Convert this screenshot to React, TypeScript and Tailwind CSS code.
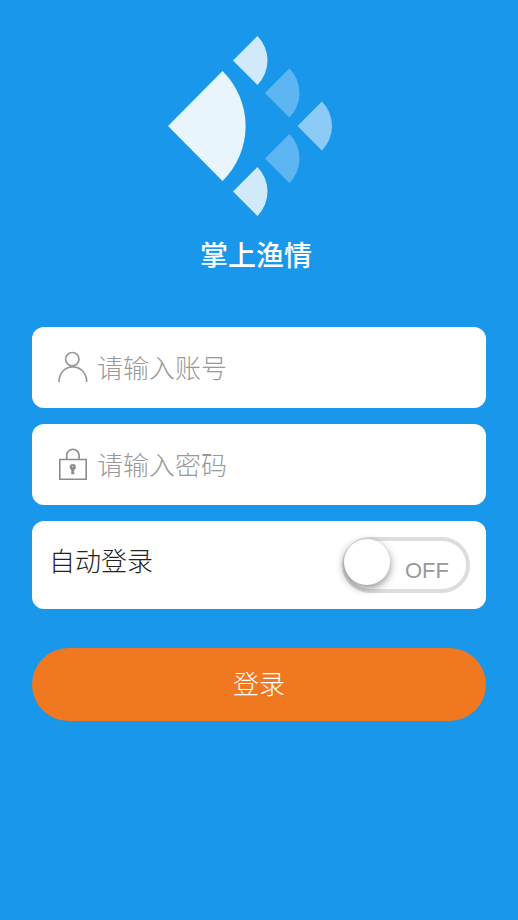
import { useState } from 'react';
import type { FormEvent, ReactNode } from 'react';

// 小扇形：顶点坐标和透明度
const scales = [
  { x: 65, y: 24.5, opacity: 0.8 },
  { x: 97, y: 57, opacity: 0.3 },
  { x: 129.5, y: 90, opacity: 0.5 },
  { x: 97, y: 122.5, opacity: 0.3 },
  { x: 65, y: 155.5, opacity: 0.8 },
];

function Logo() {
  return (
    <svg className="h-[180px] w-44" viewBox="0 0 176 180" fill="#fff" aria-hidden="true">
      <path d="M0 90L54.5 35A77 77 0 0 1 54.5 145Z" opacity="0.9" />
      {scales.map((s) => (
        <path
          key={`${s.x}-${s.y}`}
          d={`M${s.x} ${s.y}l24.4-24.4a34.5 34.5 0 0 1 0 48.8z`}
          opacity={s.opacity}
        />
      ))}
    </svg>
  );
}

function UserIcon() {
  return (
    <svg className="size-8 shrink-0" viewBox="0 0 32 32" fill="none" stroke="#999" strokeWidth="1.7" aria-hidden="true">
      <circle cx="15.3" cy="8.2" r="6.7" />
      <path d="M2 31C2 22 8 15.8 15.7 15.8S29.700 22 29.700 31" />
    </svg>
  );
}

function LockIcon() {
  return (
    <svg className="size-8 shrink-0" viewBox="0 0 32 32" fill="none" stroke="#8c8c8c" strokeWidth="1.6" aria-hidden="true">
      <path d="M2.8 11.5H29.2V31.3H2.8Z" />
      <path d="M9.7 11.5V7.5A6.200 6.200 0 0 1 22.100 7.500V11.5" />
      <circle cx="15.8" cy="19" r="3.1" fill="#8c8c8c" stroke="none" />
      <path d="M14.300 20h3v3.300h-.6v.9h.6V26.300h-3z" fill="#8c8c8c" stroke="none" />
      <circle cx="15.8" cy="18.700" r=".6" fill="#fff" stroke="none" />
    </svg>
  );
}

type FieldProps = {
  id: string;
  type: string;
  label: string;
  icon: ReactNode;
};

function Field({ id, type, label, icon }: FieldProps) {
  return (
    <div className="flex h-[81px] items-center gap-2 rounded-xl bg-white pr-4 pb-0.5 pl-[25px]">
      <label htmlFor={id}>{icon}</label>
      <input
        id={id}
        name={id}
        type={type}
        placeholder={label}
        aria-label={label}
        className="h-12 min-w-0 flex-1 bg-transparent text-[26px] font-light text-[#333] outline-none placeholder:text-[#999]"
      />
    </div>
  );
}

export default function App() {
  const [autoLogin, setAutoLogin] = useState(false);

  const handleSubmit = (e: FormEvent) => {
    e.preventDefault();
  };

  return (
    <main className="min-h-screen bg-[#1897eb] px-8 pt-9 font-['Noto_Sans_CJK_SC',sans-serif]">
      <header className="flex flex-col items-center pr-1.5">
        <Logo />
        <h1 className="mt-5 text-[28px] leading-9 font-medium text-white">掌上渔情</h1>
      </header>

      <form onSubmit={handleSubmit} className="mt-[55px] flex flex-col gap-4">
        <Field id="account" type="text" label="请输入账号" icon={<UserIcon />} />
        <Field id="password" type="password" label="请输入密码" icon={<LockIcon />} />

        <div className="flex h-[88px] items-start justify-between rounded-xl bg-white px-4 pt-4">
          <label htmlFor="auto-login" className="pl-px text-[26px] leading-[46px] font-light text-[#222]">
            自动登录
          </label>
          <div className="relative h-14 w-32">
            <input
              id="auto-login"
              type="checkbox"
              role="switch"
              checked={autoLogin}
              onChange={(e) => setAutoLogin(e.target.checked)}
              className="peer h-14 w-32 cursor-pointer appearance-none rounded-full border-4 border-[#ddd] bg-white checked:border-[#1897eb]"
            />
            <span className="pointer-events-none absolute top-0.5 left-0.5 size-[46px] rounded-full bg-white shadow-[0_3px_8px_rgba(0,0,0,0.45)] transition-transform peer-checked:translate-x-20" />
            <span
              className={`pointer-events-none absolute top-5 font-['Liberation_Sans',sans-serif] text-[22px] leading-7 text-[#999] ${autoLogin ? 'left-[21px]' : 'right-[21px]'}`}
            >
              {autoLogin ? 'ON' : 'OFF'}
            </span>
          </div>
        </div>

        <button
          type="submit"
          className="mt-[23px] h-[73px] cursor-pointer rounded-full bg-[#f07820] pb-1 text-[26px] font-light text-white"
        >
          登录
        </button>
      </form>
    </main>
  );
}
